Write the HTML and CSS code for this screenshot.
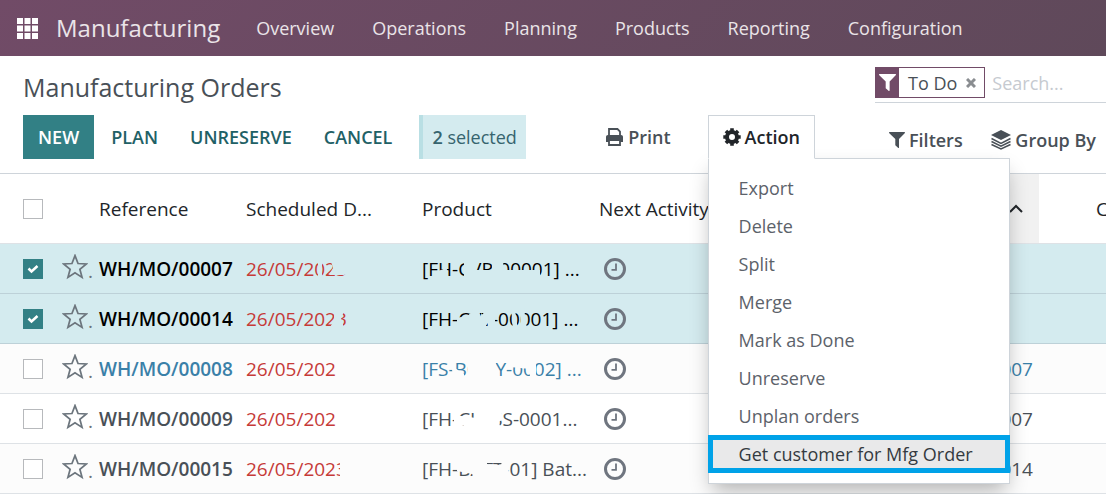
FILE: index.html
```html
<!DOCTYPE html>
<html lang="en">
<head>
    <meta charset="UTF-8">
    <meta name="viewport" content="width=device-width, initial-scale=1.0">
    <title>Manufacturing Orders</title>
    <link rel="stylesheet" href="styles.css">
</head>
<body>
    <!-- Shared icons -->
    <svg class="sprite" aria-hidden="true">
        <symbol id="star" viewBox="0 0 24 24">
            <path d="M12 1.500l2.800 7.300 7.700.4-6 4.900 2 7.500L12 17.400l-6.500 4.200 2-7.500-6-4.900 7.700-.4z" fill="none" stroke="#6c757d" stroke-width="1.600"/>
        </symbol>
        <symbol id="clock" viewBox="0 0 24 24">
            <circle cx="12" cy="12" r="9.500" fill="none" stroke="#6f757f" stroke-width="3"/>
            <path d="M13 6.500v6.300H8.500" fill="none" stroke="#6f757f" stroke-width="1.800"/>
        </symbol>
        <symbol id="filter" viewBox="0 0 16 16">
            <path d="M.3 0h15.400c.4.400.3.900 0 1.200L10 7v8.400c0 .6-.6.800-1 .4L6.300 13.300V7L.3 1.200C0 .9-.1.400.3 0z" fill="currentColor"/>
        </symbol>
    </svg>

    <nav class="navbar">
        <button class="apps" type="button" aria-label="Home menu">
            <svg width="21" height="21" viewBox="0 0 21 21" fill="#fff">
                <path d="M0 0h6v6H0zM7.500 0h6v6h-6zM15 0h6v6h-6zM0 7.500h6v6H0zM7.500 7.500h6v6h-6zM15 7.500h6v6h-6zM0 15h6v6H0zM7.500 15h6v6h-6zM15 15h6v6h-6z"/>
            </svg>
        </button>
        <a class="brand" href="#">Manufacturing</a>
        <div class="nav-links">
            <a href="#">Overview</a>
            <a href="#">Operations</a>
            <a href="#">Planning</a>
            <a href="#">Products</a>
            <a href="#">Reporting</a>
            <a href="#">Configuration</a>
        </div>
    </nav>

    <header class="control-panel">
        <div class="cp-left">
            <h1>Manufacturing Orders</h1>
            <div class="cp-buttons">
                <button class="btn btn-primary" type="button">NEW</button>
                <button class="btn" type="button">PLAN</button>
                <button class="btn" type="button">UNRESERVE</button>
                <button class="btn" type="button">CANCEL</button>
                <div class="selection"><b>2</b> selected</div>
                <div class="cp-menus">
                    <button class="menu-toggle" type="button">
                        <svg width="19" height="18" viewBox="0 0 19 18" fill="none" stroke="currentColor" stroke-width="1.800">
                            <path d="M4 8V1h8.500L15 3.500V8"/>
                            <path d="M3 7h13c1.300 0 2 .8 2 2v5h-3v-2H4v2H1V9c0-1.200.8-2 2-2z" fill="currentColor" stroke="none"/>
                            <path d="M4 12h11v5H4z" fill="#fff"/>
                        </svg>
                        Print
                    </button>
                    <div class="dropdown">
                        <button class="menu-toggle open" type="button" aria-expanded="true">
                            <svg width="18" height="18" viewBox="0 0 18 18">
                                <circle cx="9" cy="9" r="5" fill="none" stroke="currentColor" stroke-width="4"/>
                                <path d="M9 .3v3M9 14.700v3M.3 9h3M14.700 9h3M2.900 2.900L5 5M13 13l2.100 2.100M2.900 15.100L5 13M13 5l2.100-2.100" stroke="currentColor" stroke-width="3.600"/>
                            </svg>
                            Action
                        </button>
                        <ul class="dropdown-menu">
                            <li><a href="#">Export</a></li>
                            <li><a href="#">Delete</a></li>
                            <li><a href="#">Split</a></li>
                            <li><a href="#">Merge</a></li>
                            <li><a href="#">Mark as Done</a></li>
                            <li><a href="#">Unreserve</a></li>
                            <li><a href="#">Unplan orders</a></li>
                            <li><a class="highlight" href="#">Get customer for Mfg Order</a></li>
                        </ul>
                    </div>
                </div>
            </div>
        </div>
        <div class="cp-right">
            <div class="search">
                <div class="facet">
                    <span class="facet-icon"><svg width="17" height="17"><use href="#filter"/></svg></span>
                    <span>To Do</span>
                    <button type="button" aria-label="Remove filter">
                        <svg width="10" height="10" viewBox="0 0 10 10" stroke="#8a8d91" stroke-width="3"><path d="M1 1l8 8M9 1L1 9"/></svg>
                    </button>
                </div>
                <input type="text" placeholder="Search..." aria-label="Search">
            </div>
            <div class="search-options">
                <button type="button"><svg width="16" height="16"><use href="#filter"/></svg>Filters</button>
                <button type="button">
                    <svg width="20" height="20" viewBox="0 0 20 20">
                        <path d="M10 0l10 5-10 5L0 5z" fill="currentColor"/>
                        <path d="M.5 8.500L10 13.300l9.500-4.800M.5 11.500L10 16.200l9.500-4.700M.5 14.500L10 19l9.500-4.500" fill="none" stroke="currentColor" stroke-width="1.500"/>
                    </svg>Group By
                </button>
            </div>
        </div>
    </header>

    <table class="orders">
        <colgroup>
            <col class="c-check"><col class="c-star"><col class="c-ref"><col class="c-date"><col class="c-product"><col><col class="c-source"><col class="c-last">
        </colgroup>
        <thead>
            <tr>
                <th><input type="checkbox" aria-label="Select all"></th>
                <th></th>
                <th>Reference</th>
                <th>Scheduled D...</th>
                <th>Product</th>
                <th>Next Activity</th>
                <th class="sorted"><svg width="14" height="9" viewBox="0 0 14 9" fill="none" stroke="#212529" stroke-width="2"><path d="M1 8l6-6 6 6"/></svg></th>
                <th class="last">C</th>
            </tr>
        </thead>
        <tbody>
            <tr class="selected">
                <td><input type="checkbox" aria-label="Select WH/MO/00007" checked></td>
                <td class="star"><svg width="26" height="26"><use href="#star"/></svg>.</td>
                <td class="ref">WH/MO/00007</td>
                <td class="date">26/05/2023
                    <svg class="smudge" width="176" height="49"><path d="M80 14h4v22h-4zM92 14h20v14l-6 3H91l4-7z"/></svg>
                </td>
                <td class="product">[FH-CVR-00001] ...
                    <svg class="smudge" width="177" height="49"><path d="M24 27l8-3 2 3-3 9h-7zM50 14h9l3 12h64v10H50zM78 14h10l3 14H78z"/></svg>
                </td>
                <td><svg class="clock" width="24" height="24"><use href="#clock"/></svg></td>
                <td class="source"></td>
                <td></td>
            </tr>
            <tr class="selected">
                <td><input type="checkbox" aria-label="Select WH/MO/00014" checked></td>
                <td class="star"><svg width="26" height="26"><use href="#star"/></svg>.</td>
                <td class="ref">WH/MO/00014</td>
                <td class="date">26/05/2023
                    <svg class="smudge" width="176" height="49"><path d="M96 14h9v6l-2 5 2 4v7H90l6-9z"/></svg>
                </td>
                <td class="product">[FH-CVT-00001] ...
                    <svg class="smudge" width="177" height="49"><path d="M43 24l12-3 4-6h5l3 8 5-8h9v22h-7v-8l-6 8H43zM97 14l4 2 3 20h-5zM106 14h4l3 22h-6z"/></svg>
                </td>
                <td><svg class="clock" width="24" height="24"><use href="#clock"/></svg></td>
                <td class="source"></td>
                <td></td>
            </tr>
            <tr class="info">
                <td><input type="checkbox" aria-label="Select WH/MO/00008"></td>
                <td class="star"><svg width="26" height="26"><use href="#star"/></svg>.</td>
                <td class="ref">WH/MO/00008</td>
                <td class="date">26/05/202</td>
                <td class="product">[FS-BODY-0002] ...
                    <svg class="smudge" width="177" height="49"><path d="M37 14h4v10l9 6v6H39zM54 14h24l4 6v16H54zM96 14h26v22h-6V25l-20-2z"/></svg>
                </td>
                <td><svg class="clock" width="24" height="24"><use href="#clock"/></svg></td>
                <td class="source">WH/MO/00007</td>
                <td></td>
            </tr>
            <tr>
                <td><input type="checkbox" aria-label="Select WH/MO/00009"></td>
                <td class="star"><svg width="26" height="26"><use href="#star"/></svg>.</td>
                <td class="ref">WH/MO/00009</td>
                <td class="date">26/05/202</td>
                <td class="product">[FH-CLASS-0001...
                    <svg class="smudge" width="177" height="49"><path d="M40 22h8l14 2 1-10h9l4 8 5-8 6 3 2 8-4 3 2 8H52l-3-5-3 5h-6z"/></svg>
                </td>
                <td><svg class="clock" width="24" height="24"><use href="#clock"/></svg></td>
                <td class="source">WH/MO/00007</td>
                <td></td>
            </tr>
            <tr>
                <td><input type="checkbox" aria-label="Select WH/MO/00015"></td>
                <td class="star"><svg width="26" height="26"><use href="#star"/></svg>.</td>
                <td class="ref">WH/MO/00015</td>
                <td class="date">26/05/2023
                    <svg class="smudge" width="176" height="49"><path d="M102 14h14v22h-14z"/></svg>
                </td>
                <td class="product">[FH-BATT-01] Bat...
                    <svg class="smudge" width="177" height="49"><path d="M43 14h30v6l14 1 2-7h4l2 8-1 14H63l-5-6-15-3z"/></svg>
                </td>
                <td><svg class="clock" width="24" height="24"><use href="#clock"/></svg></td>
                <td class="source">WH/MO/00014</td>
                <td></td>
            </tr>
        </tbody>
    </table>
</body>
</html>
```
FILE: styles.css
```css
* {
    box-sizing: border-box;
}

body {
    margin: 0;
    overflow: hidden;
    background: #fff;
    color: #495057;
    font-family: "Open Sans", "Noto Sans", sans-serif;
    font-size: 18px;
    line-height: 24px;
}

a {
    color: inherit;
    text-decoration: none;
}

button {
    padding: 0;
    border: 0;
    background: none;
    color: inherit;
    font: inherit;
    cursor: pointer;
}

svg {
    display: block;
    flex: none;
}

.sprite {
    position: absolute;
    width: 0;
    height: 0;
}

/* Navbar */
.navbar {
    display: flex;
    align-items: center;
    height: 56px;
    padding: 0 17px;
    background: linear-gradient(135deg, #714b67, #5f495a);
    color: #eae4e8;
}

.brand {
    margin-left: 18px;
    font-size: 24px;
}

.nav-links {
    display: flex;
    gap: 38px;
    margin-left: 36px;
}

/* Control panel */
.control-panel {
    display: flex;
    border-bottom: 1px solid #ced4da;
    padding: 11px 0 14px 23px;
}

.cp-left {
    flex: 1;
}

.control-panel h1 {
    margin: 0 0 8px;
    font-size: 25px;
    font-weight: 400;
    line-height: 40px;
}

.cp-buttons {
    display: flex;
    gap: 2px;
    height: 44px;
}

.btn {
    padding: 0 15px;
    color: #1f6166;
    font-weight: 600;
}

.btn-primary {
    background: #328085;
    color: #fff;
}

.selection {
    margin-left: 10px;
    padding: 10px 9px;
    border-left: 4px solid #b9dfe4;
    background: #d4ebef;
    color: #36646e;
    white-space: nowrap;
}

.selection b {
    font-weight: 600;
}

.cp-menus {
    display: flex;
    gap: 22px;
    margin: 0 60px 0 auto;
}

.menu-toggle {
    display: flex;
    align-items: center;
    gap: 4px;
    height: 44px;
    padding: 0 14px;
    border: 1px solid transparent;
    font-weight: 600;
}

.dropdown {
    position: relative;
}

.menu-toggle.open {
    position: relative;
    z-index: 3;
    border-color: #ced4da;
    border-bottom-color: #fff;
    background: #fff;
    color: #212529;
}

.dropdown-menu {
    position: absolute;
    top: 43px;
    left: 0;
    z-index: 2;
    min-width: 302px;
    margin: 0;
    padding: 10px 0;
    border: 1px solid #ced4da;
    background: #fff;
    box-shadow: 0 10px 20px -4px rgba(0, 0, 0, 0.3);
    list-style: none;
    white-space: nowrap;
}

.dropdown-menu a {
    display: block;
    padding: 7px 30px;
    color: #5c626a;
}

.dropdown-menu .highlight {
    margin: 0 -1px;
    padding: 7px 31px;
    outline: 5px solid #00a2e8;
    outline-offset: -5px;
    background: #e9e9ea;
    color: #343a40;
}

.cp-right {
    flex: 0 0 231px;
    min-width: 0;
}

.search {
    display: flex;
    align-items: flex-start;
    height: 36px;
    border-bottom: 1px solid #ced4da;
}

.facet {
    display: flex;
    align-items: center;
    gap: 9px;
    height: 31px;
    padding-right: 8px;
    border: 1px solid #714b67;
    white-space: nowrap;
}

.facet-icon {
    display: flex;
    align-items: center;
    height: 100%;
    padding: 0 3px;
    background: #714b67;
    color: #fff;
}

.search input {
    flex: 1;
    min-width: 0;
    height: 31px;
    padding: 0 7px;
    border: 0;
    outline: 0;
    background: none;
    font: inherit;
}

.search input::placeholder {
    color: #c6cad0;
}

.search-options {
    display: flex;
    justify-content: space-between;
    padding: 25px 10px 0 14px;
    font-weight: 600;
    white-space: nowrap;
}

.search-options button {
    display: flex;
    align-items: center;
    gap: 4px;
}

/* Orders list */
.orders {
    width: 100%;
    table-layout: fixed;
    border-collapse: separate;
    border-spacing: 0;
    font-size: 19px;
}

.c-check { width: 60px; }
.c-star { width: 31px; }
.c-ref { width: 147px; }
.c-date { width: 176px; }
.c-product { width: 177px; }
.c-source { width: 160px; }
.c-last { width: 67px; }

th,
td {
    height: 50px;
    padding: 0 8px;
    border-bottom: 1px solid #dee2e6;
    text-align: left;
    white-space: nowrap;
}

th {
    height: 70px;
    color: #212529;
    font-weight: 500;
}

th:first-child,
td:first-child {
    padding-left: 23px;
}

.sorted {
    padding-right: 16px;
    background: #f1f1f1;
}

.sorted svg {
    margin-left: auto;
}

th.last {
    padding: 0 0 0 57px;
    overflow: hidden;
    text-overflow: clip;
}

tbody tr {
    --row-bg: #fff;
    background: var(--row-bg);
}

tbody tr:nth-child(odd) {
    --row-bg: #fcfcfc;
}

tbody tr.selected {
    --row-bg: #d4ebef;
    color: #000;
}

tbody tr.selected td {
    border-bottom-color: #bdd1d8;
}

tbody tr.info {
    color: #3a80a8;
}

td.star {
    padding: 0 0 0 2px;
    color: #6c757d;
}

td.star svg {
    display: inline-block;
    vertical-align: -2px;
}

td.ref {
    font-weight: 600;
}

td.date,
td.product {
    position: relative;
}

td.date {
    color: #c63a38;
}

td.source {
    padding-right: 6px;
    text-align: right;
}

.clock {
    margin-left: 4px;
}

/* Wiped-out parts of the dates and product codes */
.smudge {
    position: absolute;
    top: 0;
    left: 0;
    fill: var(--row-bg);
}

input[type="checkbox"] {
    display: block;
    width: 20px;
    height: 20px;
    margin: 0;
    border: 1px solid #b7b9bc;
    background: #fff;
    appearance: none;
}

input[type="checkbox"]:checked {
    border-color: #328085;
    background: #328085 url("data:image/svg+xml,%3Csvg xmlns='http://www.w3.org/2000/svg' viewBox='0 0 20 20'%3E%3Cpath d='M5.500 9.500l3 3 6-5.500' fill='none' stroke='%23fff' stroke-width='2.500'/%3E%3C/svg%3E") center/20px no-repeat;
}
```
